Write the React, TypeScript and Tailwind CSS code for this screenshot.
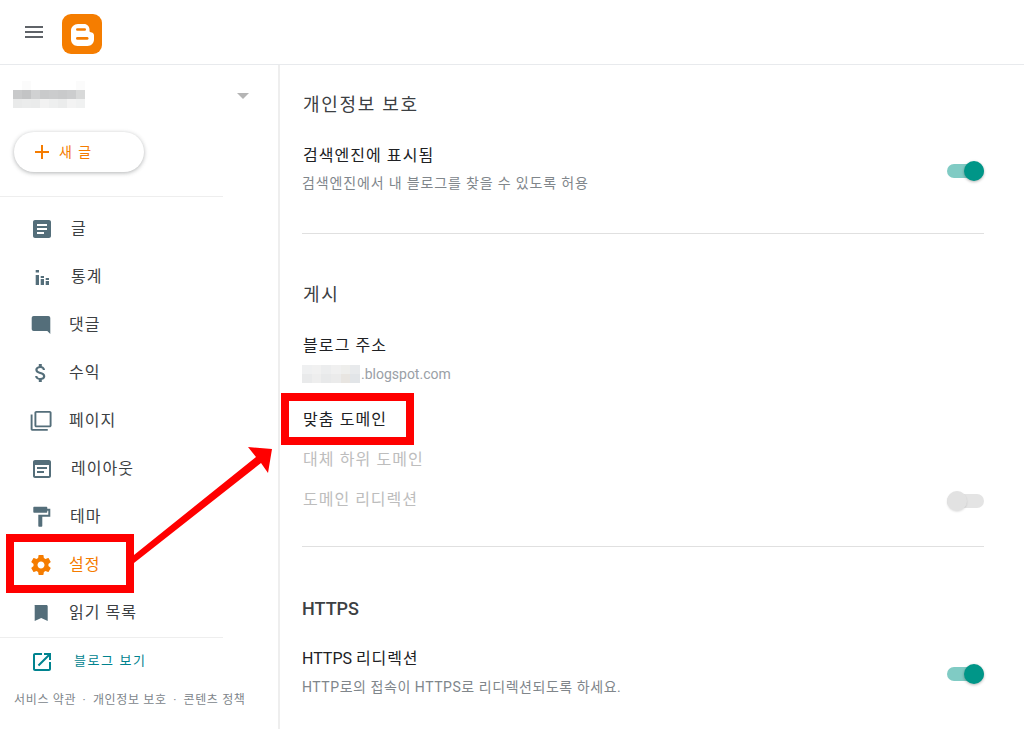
import React from 'react';

const FONT = 'font-["Roboto","Noto_Sans_CJK_KR",sans-serif]';

const navIcons: Record<string, React.ReactNode> = {
  post: <path d="M19 3H5c-1.1 0-2 .9-2 2v14c0 1.1.9 2 2 2h14c1.1 0 2-.9 2-2V5c0-1.1-.9-2-2-2zm-5 14H7v-2h7v2zm3-4H7v-2h10v2zm0-4H7V7h10v2z" />,
  stats: <path d="M5.700 5H9v2.500H5.700zM5.700 10H9v10H5.700zM10.700 11H14v2h-3.300zM10.700 14H14v6h-3.300zM15.700 13h3.300v2h-3.300zM15.700 16h3.300v4h-3.300z" />,
  comment: <path d="M3.700 3h14.600c1.100 0 2 .9 2 2v16l-3-3H3.700c-1.100 0-2-.9-2-2V5c0-1.100.9-2 2-2z" />,
  money: <path d="M11.800 10.900c-2.270-.59-3-1.200-3-2.150 0-1.090 1.010-1.850 2.700-1.850 1.780 0 2.440.85 2.500 2.100h2.210c-.07-1.720-1.120-3.300-3.210-3.810V3h-3v2.160c-1.940.42-3.500 1.680-3.500 3.610 0 2.310 1.910 3.460 4.700 4.130 2.500.6 3 1.480 3 2.410 0 .69-.49 1.790-2.700 1.790-2.060 0-2.870-.92-2.980-2.100h-2.200c.12 2.190 1.760 3.420 3.680 3.830V21h3v-2.150c1.950-.37 3.500-1.500 3.500-3.550 0-2.840-2.430-3.810-4.700-4.400z" transform="translate(-1.200 0)" />,
  pages: <path d="M3 5H1v16c0 1.1.9 2 2 2h16v-2H3V5zm18-4H7c-1.1 0-2 .9-2 2v14c0 1.1.9 2 2 2h14c1.1 0 2-.9 2-2V3c0-1.1-.9-2-2-2zm0 16H7V3h14v14z" transform="translate(-0.300 1.100) scale(0.950 0.900)" />,
  layout: <path d="M19 3H5c-1.1 0-2 .9-2 2v14c0 1.1.9 2 2 2h14c1.1 0 2-.9 2-2V5c0-1.1-.9-2-2-2zm0 16H5V8h14v11zM7 10h10v2H7zm0 4h7v2H7z" />,
  theme: <path d="M18 4V3c0-.55-.45-1-1-1H5c-.55 0-1 .45-1 1v4c0 .55.45 1 1 1h12c.55 0 1-.45 1-1V6h1v4H9v11c0 .55.45 1 1 1h2c.55 0 1-.45 1-1v-9h8V4h-3z" transform="translate(-0.700 -0.300)" />,
  settings: <path d="M19.430 12.980c.04-.32.07-.64.07-.98s-.03-.66-.07-.98l2.110-1.650c.19-.15.24-.42.12-.64l-2-3.460c-.12-.22-.39-.3-.61-.22l-2.490 1c-.52-.4-1.080-.73-1.690-.98l-.38-2.650C14.460 2.180 14.250 2 14 2h-4c-.25 0-.46.18-.49.42l-.38 2.650c-.61.25-1.170.59-1.690.98l-2.490-1c-.23-.09-.49 0-.61.22l-2 3.460c-.13.22-.07.49.12.64l2.110 1.650c-.04.32-.07.65-.07.98s.03.66.07.98l-2.110 1.650c-.19.15-.24.42-.12.64l2 3.460c.12.22.39.3.61.22l2.490-1c.52.4 1.080.73 1.690.98l.38 2.650c.03.24.24.42.49.42h4c.25 0 .46-.18.49-.42l.38-2.650c.61-.25 1.170-.59 1.690-.98l2.490 1c.23.09.49 0 .61-.22l2-3.460c.12-.22.07-.49-.12-.64l-2.110-1.650zM12 15.500c-1.930 0-3.500-1.570-3.500-3.500s1.570-3.500 3.500-3.500 3.500 1.570 3.500 3.500-1.570 3.500-3.500 3.500z" transform="translate(-1 0)" />,
  bookmark: <path d="M6 4h11.400c.7 0 1.300.6 1.300 1.300V20l-6.500-3-6.500 3V5.300C5.700 4.600 5.300 4 6 4z" transform="translate(-1 0)" />,
};

const navItems = [
  { icon: 'post', label: '글', gap: 'ml-[17px]' },
  { icon: 'stats', label: '통계', gap: 'ml-[17px]' },
  { icon: 'comment', label: '댓글', gap: 'ml-[15px]' },
  { icon: 'money', label: '수익', gap: 'ml-[15px]' },
  { icon: 'pages', label: '페이지', gap: 'ml-[15px]' },
  { icon: 'layout', label: '레이아웃', gap: 'ml-[17px]' },
  { icon: 'theme', label: '테마', gap: 'ml-[16px]' },
  { icon: 'settings', label: '설정', gap: 'ml-[15px]', active: true },
  { icon: 'bookmark', label: '읽기 목록', gap: 'ml-[15px]' },
];

// pixelated blog name, three rows of eight
const nameCells = [
  'bg-[#ffffff]', 'bg-[#fbfbfb]', 'bg-[#ffffff]', 'bg-[#ffffff]', 'bg-[#ffffff]', 'bg-[#ffffff]', 'bg-[#ffffff]', 'bg-[#fbfbfb]',
  'bg-[#c8c9ca]', 'bg-[#c3c4c5]', 'bg-[#d0d1d2]', 'bg-[#c9cacb]', 'bg-[#cbcccd]', 'bg-[#c9cacb]', 'bg-[#cccdce]', 'bg-[#d8d9d9]',
  'bg-[#e9eaea]', 'bg-[#ebecec]', 'bg-[#eaebeb]', 'bg-[#f2f2f2]', 'bg-[#eeefef]', 'bg-[#ebecec]', 'bg-[#f3f3f3]', 'bg-[#f0f1f1]',
];

// pixelated address, two rows of six
const addressCells = [
  'bg-[#eff0f1]', 'bg-[#f1f1f1]', 'bg-[#ecedee]', 'bg-[#f0f0f0]', 'bg-[#eeeeec]', 'bg-[#e8eaec]',
  'bg-[#e9eaeb]', 'bg-[#eeeeee]', 'bg-[#e8e9ea]', 'bg-[#ebebeb]', 'bg-[#e8e5e1]', 'bg-[#e2e5e8]',
];

const Toggle = ({ on, className = '' }: { on: boolean; className?: string }) => (
  <div className={`relative h-[14px] w-[37px] shrink-0 ${className}`}>
    <div className={`h-[14px] w-full rounded-full ${on ? 'bg-[#80cbc4]' : 'bg-[#e4e4e4]'}`} />
    <div
      className={`absolute top-[-3px] h-5 w-5 rounded-full ${
        on ? 'right-0 bg-[#009688] shadow-[0_1px_3px_rgba(0,0,0,0.3)]' : 'left-0 bg-[#e2e2e2] shadow-[0_1px_2px_rgba(0,0,0,0.12)]'
      }`}
    />
  </div>
);

const SectionTitle = ({ children, bold }: { children: React.ReactNode; bold?: boolean }) => (
  <h2 className={`text-[18px] leading-6 text-[#3c4043] ${bold ? 'font-medium' : 'pl-px tracking-[1.7px]'}`}>{children}</h2>
);

const App: React.FC = () => {
  return (
    <div className={`relative h-[729px] w-[1024px] overflow-hidden bg-white ${FONT}`}>
      <header className="flex h-[65px] items-center border-b border-[#e8eaed] pl-[25px]">
        <div className="flex flex-col gap-[3px]">
          <span className="h-[2px] w-[18px] bg-[#5f6368]" />
          <span className="h-[2px] w-[18px] bg-[#5f6368]" />
          <span className="h-[2px] w-[18px] bg-[#5f6368]" />
        </div>
        <svg viewBox="0 0 40 40" className="ml-[19px] mt-[4px] h-10 w-10">
          <rect width="40" height="40" rx="9" fill="#f57d00" />
          <path d="M16 10h6c3.300 0 5.500 2.500 5.500 5.500v1.500c0 .8.5 1.100 1.200 1.300 1.600.2 3.300 1 3.300 3v4.200c0 3.600-2.900 6.500-6.500 6.500H15.500C12 32 9 29.100 9 25.500v-9C9 13 12 10 16 10z" fill="#fff" />
          <rect x="14" y="14.300" width="10" height="2.500" rx="1.250" fill="#f57d00" />
          <rect x="14" y="23" width="12.500" height="2.800" rx="1.400" fill="#f57d00" />
        </svg>
      </header>

      <div className="flex h-[664px]">
        <aside className="flex w-[280px] shrink-0 flex-col border-r-2 border-[#eeeeee]">
          <div className="w-[223px] flex-none">
            <div className="flex h-[66px] items-start justify-between pt-[16px]">
              <div className="ml-[13px] grid h-[27px] w-[72px] grid-cols-8 grid-rows-3">
                {nameCells.map((c, i) => (
                  <div key={i} className={c} />
                ))}
              </div>
              <span className="mr-[-26px] mt-[12px] h-0 w-0 border-x-[6px] border-t-[6px] border-x-transparent border-t-[#b5b5b5]" />
            </div>
            <div className="pl-[14px] pt-[1px]">
              <button className="flex h-10 w-[130px] items-center rounded-full bg-white pl-[21px] text-[14px] tracking-[1.5px] text-[#f57c00] shadow-[0_1px_4px_rgba(60,64,67,0.4)]">
                <svg viewBox="0 0 14 14" className="mr-[10px] h-[14px] w-[14px]" fill="#f57c00">
                  <path d="M6 0h2v6h6v2H8v6H6V8H0V6h6z" />
                </svg>
                새 글
              </button>
            </div>
          </div>

          <nav className="mt-[24px] w-[223px] border-y border-[#eeeeee] pt-[7px] pb-[1px]">
            {navItems.map((item) => (
              <div key={item.label} className="flex h-[48px] items-center pl-[30px]">
                <svg
                  viewBox="0 0 24 24"
                  className={`h-6 w-6 shrink-0 translate-y-px ${item.active ? 'fill-[#f57c00]' : 'fill-[#546e7a]'}`}
                >
                  {navIcons[item.icon]}
                </svg>
                <span
                  className={`${item.gap} translate-y-px text-[16px] tracking-[1px] ${
                    item.active ? 'text-[#f57c00]' : 'text-[#3c4043]'
                  }`}
                >
                  {item.label}
                </span>
              </div>
            ))}
          </nav>

          <div className="flex h-[46px] items-center pl-[30px]">
            <svg viewBox="0 0 24 24" className="h-6 w-6 translate-y-px fill-[#00838f]">
              <path d="M19 19H5V5h7V3H5c-1.100 0-2 .9-2 2v14c0 1.100.9 2 2 2h14c1.100 0 2-.9 2-2v-7h-2v7zM14 3v2h3.590l-9.830 9.830 1.410 1.410L19 6.410V10h2V3h-7z" />
            </svg>
            <span className="ml-[20px] text-[13px] tracking-[1.6px] text-[#00838f]">블로그 보기</span>
          </div>
          <div className="ml-[14px] mt-[7px] flex gap-[6.5px] text-[12px] tracking-[0.65px] text-[#80868b]">
            <span>서비스 약관</span>
            <span>·</span>
            <span>개인정보 보호</span>
            <span>·</span>
            <span>콘텐츠 정책</span>
          </div>
        </aside>

        <main className="min-w-0 flex-1 pl-[22px] pr-[40px]">
          <section className="h-[169px] border-b border-[#e0e0e0] pt-[28px]">
            <SectionTitle>개인정보 보호</SectionTitle>
            <div className="mt-[27px] flex items-center justify-between">
              <div>
                <div className="pl-px text-[16px] leading-[24px] tracking-[1.05px] text-[#202124]">검색엔진에 표시됨</div>
                <div className="mt-[5px] text-[14px] leading-[20px] tracking-[0.85px] text-[#80868b]">
                  검색엔진에서 내 블로그를 찾을 수 있도록 허용
                </div>
              </div>
              <Toggle on className="mt-[5px]" />
            </div>
          </section>

          <section className="h-[313px] border-b border-[#e0e0e0] pt-[49px]">
            <SectionTitle>게시</SectionTitle>
            <div className="mt-[27px] pl-px text-[16px] leading-[24px] tracking-[1.1px] text-[#202124]">블로그 주소</div>
            <div className="mt-[6px] flex h-5 items-center text-[14px] text-[#9aa0a6]">
              <span className="mr-px grid h-[18px] w-[58px] grid-cols-6 grid-rows-2">
                {addressCells.map((c, i) => (
                  <span key={i} className={c} />
                ))}
              </span>
              .blogspot.com
            </div>
            <div className="mt-[24px] pl-px text-[16px] leading-[24px] tracking-[1.1px] text-[#202124]">맞춤 도메인</div>
            <div className="mt-[16px] pl-px text-[16px] leading-[24px] tracking-[1.1px] text-[#bdbdbd]">대체 하위 도메인</div>
            <div className="mt-[16px] flex items-center justify-between">
              <span className="pl-px text-[16px] leading-[24px] tracking-[1px] text-[#bdbdbd]">도메인 리디렉션</span>
              <Toggle on={false} className="mt-[2px]" />
            </div>
          </section>

          <section className="pt-[50px]">
            <SectionTitle bold>HTTPS</SectionTitle>
            <div className="mt-[26px] flex items-center justify-between">
              <div>
                <div className="text-[16px] leading-[24px] text-[#202124]">
                  HTTPS <span className="tracking-[0.9px]">리디렉션</span>
                </div>
                <div className="mt-[6px] text-[14px] leading-[20px] tracking-[0.55px] text-[#80868b]">
                  HTTP로의 접속이 HTTPS로 리디렉션되도록 하세요.
                </div>
              </div>
              <Toggle on className="mt-[4px]" />
            </div>
          </section>
        </main>
      </div>

      {/* Annotations drawn on top of the screenshot */}
      <div className="absolute left-[6px] top-[534px] h-[59px] w-[128px] border-[8px] border-[#ff0000]" />
      <div className="absolute left-[281px] top-[393px] h-[52px] w-[133px] border-[8px] border-[#ff0000]" />
      <svg className="absolute left-0 top-0 h-[729px] w-[1024px]" viewBox="0 0 1024 729" fill="#ff0000">
        <polygon points="134,555 256,457 248,447 272,449 268,473 261,463 134,563" />
      </svg>
    </div>
  );
};

export default App;
